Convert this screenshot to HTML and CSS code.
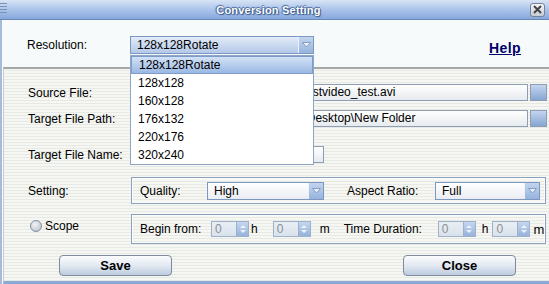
FILE: index.html
```html
<!DOCTYPE html>
<html lang="en">
<head>
<meta charset="UTF-8">
<title>Conversion Setting</title>
<link rel="stylesheet" href="styles.css">
</head>
<body>
<div class="window">
    <div class="titlebar">
        <span class="grip"></span>
        <span class="title">Conversion Setting</span>
        <span class="close-btn"><svg width="9" height="9" viewBox="0 0 9 9"><path d="M1 1L8 8M8 1L1 8" stroke="#444" stroke-width="2"/></svg></span>
    </div>
    <div class="content">
        <div class="top-row">
            <span class="label">Resolution:</span>
            <div class="combo combo-blue combo-res">
                <span class="combo-text">128x128Rotate</span>
                <span class="combo-btn"><svg width="9" height="6" viewBox="0 0 9 6"><path d="M.5 .5h8L4.5 5z" fill="#eef3fb" stroke="#7f9bc6"/></svg></span>
            </div>
            <a class="help" href="#">Help</a>
        </div>

        <div class="panel">
            <div class="row row-source">
                <span class="label">Source File:</span>
                <div class="field field-path">C:\Documents and Settings\Test\stvideo_test.avi</div>
                <span class="browse"></span>
            </div>
            <div class="row row-target">
                <span class="label">Target File Path:</span>
                <div class="field field-path">C:\Documents and Settings\Lin\Desktop\New Folder</div>
                <span class="browse"></span>
            </div>
            <div class="row row-name">
                <span class="label">Target File Name:</span>
                <div class="field field-name"></div>
            </div>
            <div class="row row-setting">
                <span class="label">Setting:</span>
                <div class="group">
                    <span class="glabel glabel-quality">Quality:</span>
                    <div class="combo combo-white combo-quality">
                        <span class="combo-text">High</span>
                        <span class="combo-btn"><svg width="9" height="6" viewBox="0 0 9 6"><path d="M.5 .5h8L4.5 5z" fill="#eef3fb" stroke="#7f9bc6"/></svg></span>
                    </div>
                    <span class="glabel glabel-aspect">Aspect Ratio:</span>
                    <div class="combo combo-white combo-aspect">
                        <span class="combo-text">Full</span>
                        <span class="combo-btn"><svg width="9" height="6" viewBox="0 0 9 6"><path d="M.5 .5h8L4.5 5z" fill="#eef3fb" stroke="#7f9bc6"/></svg></span>
                    </div>
                </div>
            </div>
            <div class="row row-scope">
                <label class="label scope-label"><span class="radio"></span>Scope</label>
                <div class="group group-scope">
                    <span class="glabel glabel-begin">Begin from:</span>
                    <span class="spin"><span class="spin-val">0</span><span class="spin-btn"><i class="up"></i><i class="down"></i></span></span>
                    <span class="unit unit-h1">h</span>
                    <span class="spin"><span class="spin-val">0</span><span class="spin-btn"><i class="up"></i><i class="down"></i></span></span>
                    <span class="unit unit-m1">m</span>
                    <span class="glabel glabel-duration">Time Duration:</span>
                    <span class="spin"><span class="spin-val">0</span><span class="spin-btn"><i class="up"></i><i class="down"></i></span></span>
                    <span class="unit unit-h2">h</span>
                    <span class="spin"><span class="spin-val">0</span><span class="spin-btn"><i class="up"></i><i class="down"></i></span></span>
                    <span class="unit unit-m2">m</span>
                </div>
            </div>
            <div class="row row-buttons">
                <button type="button" class="btn btn-save">Save</button>
                <button type="button" class="btn btn-close">Close</button>
            </div>
        </div>

        <ul class="dropdown">
            <li class="selected">128x128Rotate</li>
            <li>128x128</li>
            <li>160x128</li>
            <li>176x132</li>
            <li>220x176</li>
            <li>320x240</li>
        </ul>
    </div>
</div>
</body>
</html>
```

FILE: styles.css
```css
*{box-sizing:border-box;}
html,body{
    margin:0;
    padding:0;
}
body{
    width:549px;
    height:284px;
    overflow:hidden;
    font-family:"Liberation Sans",Arial,sans-serif;
    font-size:12px;
    color:#000;
    background:#f6fafa;
}
.window{
    width:549px;
    height:284px;
    display:flex;
    flex-direction:column;
}
.titlebar{
    height:20px;
    flex:none;
    display:flex;
    align-items:center;
    background:linear-gradient(#d8e4f5 0%,#b0c7ec 45%,#86a7dc 100%);
    border-bottom:1px solid #6a86b2;
}
.grip{
    width:7px;
    height:12px;
    margin-top:-2px;
    flex:none;
    background:repeating-linear-gradient(#7d92b2 0 1px,transparent 1px 3px);
}
.title{
    flex:1;
    text-align:center;
    font-size:11px;
    font-weight:bold;
    color:#fff;
    letter-spacing:.2px;
    text-shadow:0 0 1px #2f4f86,1px 1px 1px #3b5a8e,-1px 0 1px #4b6a9e,0 -1px 1px #4b6a9e;
}
.close-btn{
    width:15px;
    height:14px;
    margin-right:4px;
    flex:none;
    display:flex;
    align-items:center;
    justify-content:center;
    border:1px solid #76849a;
    border-radius:3px;
    background:linear-gradient(#f4f6f8,#c6ccd4);
}
.content{
    flex:1;
    display:flex;
    flex-direction:column;
    position:relative;
    border-left:2px solid #a6bbd8;
}
.top-row{
    height:47px;
    flex:none;
    display:flex;
    align-items:flex-start;
    padding:16px 0 0 25px;
}
.top-row .label{
    width:103px;
    line-height:18px;
}
.label{
    flex:none;
    width:103px;
    white-space:nowrap;
}
.help{
    margin:4px 0 0 175px;
    font-size:14px;
    font-weight:bold;
    color:#00006b;
    letter-spacing:.4px;
}

/* combos */
.combo{
    display:flex;
    align-items:stretch;
    height:18px;
    border:1px solid #7c98c2;
}
.combo-text{
    flex:1;
    padding-left:6px;
    line-height:16px;
    white-space:nowrap;
    overflow:hidden;
}
.combo-btn{
    width:15px;
    flex:none;
    display:flex;
    align-items:center;
    justify-content:center;
    border-left:1px solid #eef3fb;
    background:linear-gradient(#c3d5ee,#97b4de);
}
.combo-blue{background:linear-gradient(#e3ecf8,#b3c8e8);}
.combo-white{background:linear-gradient(#fff,#e9edf2);}
.combo-res{width:184px;}
.combo-quality{width:117px;}
.combo-aspect{width:105px;}

/* panel */
.panel{
    flex:1;
    margin-left:1px;
    padding:15px 2px 0 24px;
    border-top:2px solid #a2a8a6;
    border-left:1px solid #c6ccd0;
    border-bottom:3px solid #8ba8d6;
    background:repeating-linear-gradient(#f6f7f3 0 1px,#e7e9e5 1px 2px,#f6f7f3 2px 3px);
}
.row{
    display:flex;
    align-items:center;
}
.field{
    height:17px;
    border:1px solid #8d9eb4;
    background:linear-gradient(#fff,#e6eaee);
    padding-left:6px;
    line-height:15px;
    white-space:nowrap;
    overflow:hidden;
}
.field-path{flex:1;}
.field-name{width:193px;}
.browse{
    width:17px;
    height:17px;
    margin-left:2px;
    flex:none;
    border:1px solid #8d9eb4;
    background:linear-gradient(#c4d5ee,#87a6d3);
}
.row-target{margin-top:9px;}
.row-name{margin-top:19px;}
.row-setting{margin-top:14px;}
.row-scope{margin-top:10px;}
.row-buttons{margin-top:11px;}

/* group boxes */
.group{
    width:415px;
    height:27px;
    display:flex;
    align-items:center;
    padding-left:8px;
    border:1px solid #8ca1bd;
    box-shadow:inset 0 0 0 1px #fbfcfd;
}
.group-scope{height:30px;}
.glabel{flex:none;white-space:nowrap;}
.glabel-quality{width:67px;}
.glabel-aspect{width:88px;margin-left:23px;}
.glabel-begin{width:71px;}
.glabel-duration{width:94px;margin-left:14px;}

/* radio */
.scope-label{
    display:flex;
    align-items:center;
    padding:0 0 7px 2px;
}
.radio{
    width:12px;
    height:12px;
    margin-right:3px;
    border-radius:50%;
    border:1px solid #7f8ea3;
    background:radial-gradient(circle at 40% 35%,#f2f4f6,#b4bcc8);
}

/* spinners */
.spin{
    display:flex;
    height:16px;
    flex:none;
}
.spin-val{
    width:25px;
    border:1px solid #9fb1c8;
    border-right:none;
    background:linear-gradient(#e9eef4,#d9e2ec);
    color:#8a8f96;
    padding-left:3px;
    line-height:14px;
}
.spin-btn{
    width:13px;
    display:flex;
    flex-direction:column;
    align-items:center;
    justify-content:space-evenly;
    border:1px solid #9fb1c8;
    background:linear-gradient(#c5d6ef,#96b3dd);
}
.spin-btn i{
    width:0;
    height:0;
    border-left:3px solid transparent;
    border-right:3px solid transparent;
}
.spin-btn .up{border-bottom:3px solid #eef3fb;}
.spin-btn .down{border-top:3px solid #eef3fb;}
.unit{flex:none;}
.unit-h1{margin:0 15px 0 2px;}
.unit-m1{margin-left:9px;}
.unit-h2{margin:0 4px 0 6px;}
.unit-m2{margin-left:3px;font-size:13px;}

/* buttons */
.btn{
    width:113px;
    height:21px;
    border:1px solid #7f8a9b;
    border-radius:4px;
    background:linear-gradient(#fbfcfd 0%,#e3e9f1 50%,#bccbe0 100%);
    font-family:"Liberation Sans",Arial,sans-serif;
    font-size:13px;
    font-weight:bold;
    color:#000;
    padding:0;
    cursor:pointer;
}
.btn-save{margin-left:31px;}
.btn-close{margin-left:231px;}

/* open resolution list */
.dropdown{
    position:absolute;
    left:128px;
    top:35px;
    width:184px;
    margin:0;
    padding:0;
    list-style:none;
    background:#fff;
    border:1px solid #8fa6c4;
}
.dropdown li{
    height:18px;
    line-height:18px;
    padding-left:7px;
}
.dropdown li.selected{
    border:1px solid #7d9ccb;
    line-height:16px;
    background:linear-gradient(#d3e2f6,#9ab8e3);
}
```
